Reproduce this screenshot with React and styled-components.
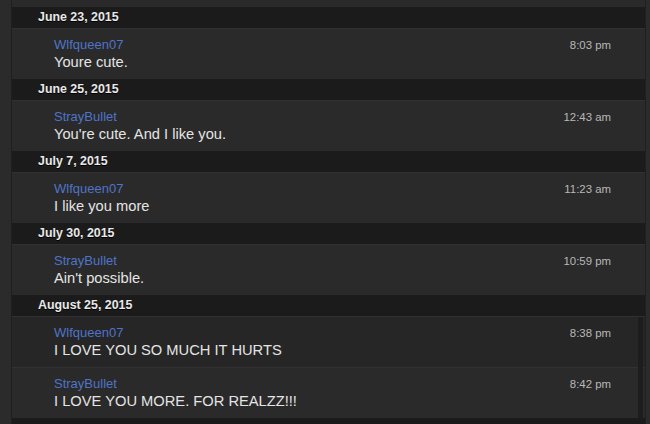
import React from "react";
import styled, { createGlobalStyle } from "styled-components";

const Global = createGlobalStyle`
  html, body { margin: 0; padding: 0; background: #2b2b2b; }
  body { font-family: "Liberation Sans", Arial, Helvetica, sans-serif; }
`;

const Page = styled.div`
  display: flex;
  height: 424px;
  padding: 0 4px 0 11px;
  box-sizing: border-box;
  overflow: hidden;
`;

const Panel = styled.div`
  flex: 1;
  background: #1b1b1b;
  border-left: 1px solid #1f1f1f;
  border-right: 1px solid #1f1f1f;
  display: flex;
  flex-direction: column;
  overflow: hidden;
`;

const TopEdge = styled.div`
  height: 7px;
  flex: none;
  background: #2a2a2a;
`;

const Group = styled.section`
  display: flex;
  flex-direction: column;
`;

const DateHeader = styled.div`
  height: 21px;
  line-height: 21px;
  padding-left: 26px;
  background: #1b1b1b;
  color: #e9e9e9;
  font-weight: bold;
  font-size: 12.4px;
  text-shadow: 0 1px 0 #000;
`;

const Rows = styled.div`
  position: relative;
  display: flex;
  flex-direction: column;
  ${(p) =>
    p.$scroll &&
    `
    &::after {
      content: "";
      position: absolute;
      top: 1px;
      bottom: 0;
      right: 2px;
      width: 5px;
      background: #1d1d1d;
    }
  `}
`;

const Row = styled.div`
  display: flex;
  align-items: flex-start;
  padding: 8px 34px 8px 42px;
  border-top: 1px solid #313131;
  background: ${(p) => (p.$dim ? "#262626" : "#2a2a2a")};
`;

const Body = styled.div`
  flex: 1;
  display: flex;
  flex-direction: column;
`;

const Name = styled.div`
  color: #4f74c8;
  font-size: 13px;
  line-height: 16px;
`;

const Text = styled.div`
  color: #e4e4e4;
  font-size: 14.7px;
  line-height: 18px;
`;

const Time = styled.div`
  color: #b8b8b8;
  font-size: 11.4px;
  line-height: 16px;
  white-space: nowrap;
`;

const groups = [
  {
    date: "June 23, 2015",
    messages: [{ name: "Wlfqueen07", text: "Youre cute.", time: "8:03 pm" }],
  },
  {
    date: "June 25, 2015",
    messages: [
      { name: "StrayBullet", text: "You're cute. And I like you.", time: "12:43 am" },
    ],
  },
  {
    date: "July 7, 2015",
    messages: [{ name: "Wlfqueen07", text: "I like you more", time: "11:23 am" }],
  },
  {
    date: "July 30, 2015",
    messages: [{ name: "StrayBullet", text: "Ain't possible.", time: "10:59 pm" }],
  },
  {
    date: "August 25, 2015",
    scroll: true,
    messages: [
      { name: "Wlfqueen07", text: "I LOVE YOU SO MUCH IT HURTS", time: "8:38 pm", dim: true },
      { name: "StrayBullet", text: "I LOVE YOU MORE. FOR REALZZ!!!", time: "8:42 pm" },
    ],
  },
];

export default function App() {
  return (
    <>
      <Global />
      <Page>
        <Panel>
          <TopEdge />
          {groups.map((g) => (
            <Group key={g.date}>
              <DateHeader>{g.date}</DateHeader>
              <Rows $scroll={g.scroll}>
                {g.messages.map((m, i) => (
                  <Row key={i} $dim={m.dim}>
                    <Body>
                      <Name>{m.name}</Name>
                      <Text>{m.text}</Text>
                    </Body>
                    <Time>{m.time}</Time>
                  </Row>
                ))}
              </Rows>
            </Group>
          ))}
        </Panel>
      </Page>
    </>
  );
}
